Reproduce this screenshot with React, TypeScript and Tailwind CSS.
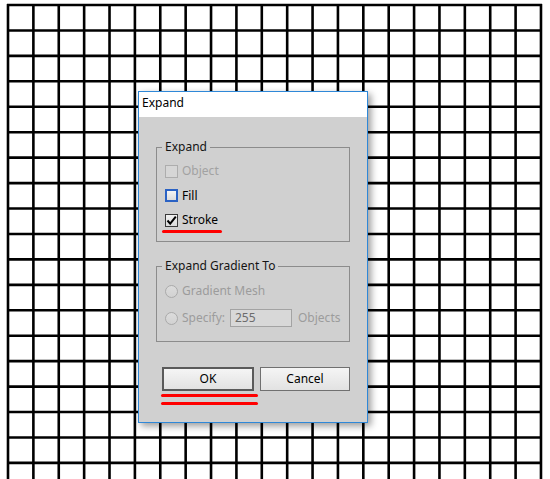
const COLS = 22;
const ROWS = 19;
const STEP_X = 25.38;
const STEP_Y = 25.44;

function GridArt() {
  const xs = Array.from({ length: COLS }, (_, i) => 8 + i * STEP_X);
  const ys = Array.from({ length: ROWS }, (_, i) => 5 + i * STEP_Y);
  return (
    <svg
      className="absolute inset-0"
      width={550}
      height={479}
      viewBox="0 0 550 479"
    >
      {xs.map((x) => (
        <line key={`v${x}`} x1={x} y1={4} x2={x} y2={479} stroke="#000" strokeWidth={2.6} />
      ))}
      {ys.map((y) => (
        <line key={`h${y}`} x1={7} y1={y} x2={542} y2={y} stroke="#000" strokeWidth={2.6} />
      ))}
    </svg>
  );
}

function CheckBox({ state }: { state: 'disabled' | 'focused' | 'checked' }) {
  if (state === 'disabled') {
    return <span className="block w-[13px] h-[13px] border border-[#adadad] bg-[#d6d6d6]" />;
  }
  if (state === 'focused') {
    return (
      <span className="block w-[13px] h-[13px] border-2 border-[#2a62c4] bg-linear-to-b from-[#f4f4f4] to-[#dcdcdc]" />
    );
  }
  return (
    <span className="relative block w-[13px] h-[13px] border border-[#3a3a3a] bg-linear-to-b from-[#f2f2f2] to-[#dadada]">
      <svg className="absolute -left-px -top-px" width={13} height={13} viewBox="0 0 13 13">
        <path d="M2.5 6.5 L5.2 9.6 L10.8 2.6" fill="none" stroke="#000" strokeWidth={2} />
      </svg>
    </span>
  );
}

function Radio() {
  return (
    <span className="block w-[13px] h-[13px] rounded-full border border-[#aaaaaa] bg-linear-to-b from-[#dcdcdc] to-[#d2d2d2]" />
  );
}

function RedMark({ className }: { className: string }) {
  return <span className={`absolute h-[3px] rounded-full bg-[#ff0000] ${className}`} />;
}

function ExpandDialog() {
  return (
    <div className="absolute left-[138px] top-[91px] w-[230px] h-[332px] border border-[#2f88d8] bg-[#d0d0d0] shadow-[3px_3px_7px_rgba(0,0,0,0.4)] flex flex-col">
      {/* Title bar */}
      <div className="h-[25px] bg-white pl-[3px] pt-[3px] leading-[16px] text-black">Expand</div>

      <div className="px-[17px] pt-[22px] flex flex-col">
        {/* Expand group */}
        <fieldset className="min-w-0 m-0 p-0 border border-[#8c8c8c]">
          <legend className="ml-[5px] px-[3px] leading-[16px] text-[#141414]">Expand</legend>
          <div className="pl-[8px] pt-[4px] pb-[9px] flex flex-col">
            <div className="h-6 flex items-center gap-[4px] text-[#a2a2a2]">
              <CheckBox state="disabled" />
              <span>Object</span>
            </div>
            <div className="h-[25px] flex items-center gap-[4px] text-black">
              <CheckBox state="focused" />
              <span>Fill</span>
            </div>
            <div className="relative h-6 flex items-center gap-[4px] text-black">
              <CheckBox state="checked" />
              <span>Stroke</span>
              <RedMark className="left-[-3px] top-[22px] w-[60px]" />
            </div>
          </div>
        </fieldset>

        {/* Gradient group */}
        <fieldset className="min-w-0 m-0 mt-[16px] p-0 border border-[#8c8c8c]">
          <legend className="ml-[5px] px-[3px] leading-[16px] text-[#141414]">Expand Gradient To</legend>
          <div className="pl-[8px] pt-[5px] pb-[11px] flex flex-col text-[#9c9c9c]">
            <div className="h-6 flex items-center gap-[4px]">
              <Radio />
              <span>Gradient Mesh</span>
            </div>
            <div className="mt-[3px] h-6 flex items-center gap-[4px]">
              <Radio />
              <span className="w-[44px]">Specify:</span>
              <span className="w-[62px] h-[18px] border border-[#a3a3a3] bg-[#d8d8d8] pl-[4px] leading-[16px] text-[#6c6c6c]">
                255
              </span>
              <span className="ml-[2px]">Objects</span>
            </div>
          </div>
        </fieldset>

        {/* Buttons */}
        <div className="mt-[25px] flex justify-end gap-[6px]">
          <div className="relative">
            <button className="w-[92px] h-[24px] border-2 border-[#5a5a5a] bg-linear-to-b from-[#f5f5f5] to-[#e2e2e2] text-black leading-[16px]">
              OK
            </button>
            <RedMark className="left-[-1px] top-[27px] w-[97px]" />
            <RedMark className="left-[-1px] top-[35px] w-[97px]" />
          </div>
          <button className="w-[90px] h-[24px] border border-[#707070] bg-linear-to-b from-[#f5f5f5] to-[#e2e2e2] text-black leading-[16px]">
            Cancel
          </button>
        </div>
      </div>
    </div>
  );
}

export default function App() {
  return (
    <div className="relative h-[479px] w-[550px] overflow-hidden bg-white font-['Noto_Sans',sans-serif] text-[12px]">
      <GridArt />
      <ExpandDialog />
    </div>
  );
}
